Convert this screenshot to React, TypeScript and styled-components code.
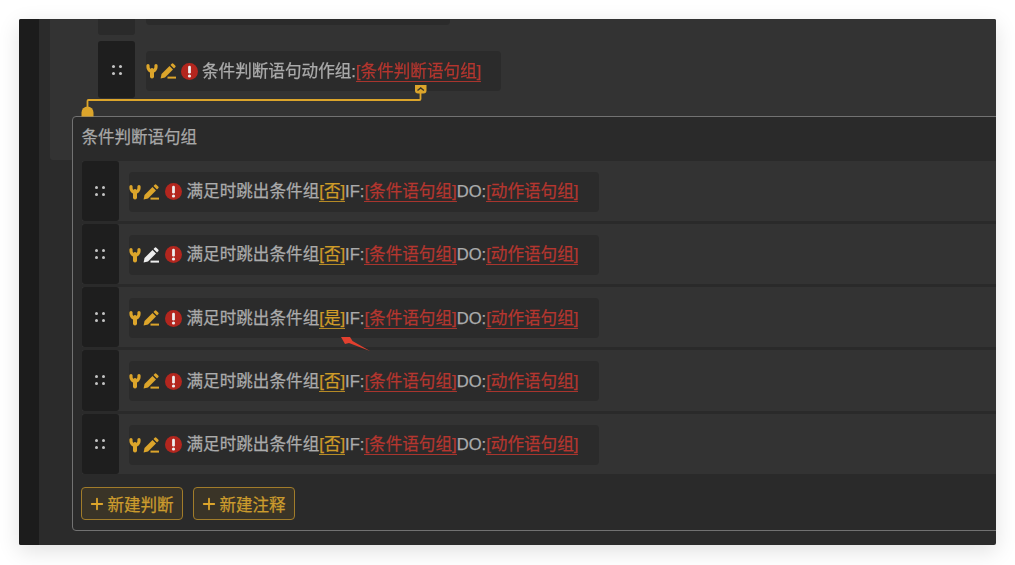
import React from "react";
import styled, { createGlobalStyle } from "styled-components";
import { Plus } from "lucide-react";

const GlobalStyle = createGlobalStyle`
	html, body {
		margin: 0;
		background: #fff;
		font-family: "Liberation Sans", "Noto Sans CJK SC", sans-serif;
	}
`;

const Page = styled.div`
	width: 1015px;
	height: 565px;
	padding: 19px;
	box-sizing: border-box;
	overflow: hidden;
`;

const Frame = styled.div`
	position: relative;
	display: flex;
	width: 977px;
	height: 526px;
	overflow: hidden;
	border-radius: 2px;
	background: #2b2b2b;
	box-shadow: 0 6px 22px rgba(0, 0, 0, 0.12);
	filter: blur(0.5px);
`;

const Strip = styled.div`
	width: 20px;
	background: #1c1c1c;
`;

const Main = styled.div`
	flex: 1;
	padding-left: 11px;
`;

const OuterPanel = styled.div`
	height: 141px;
	padding-left: 48px;
	background: #333;
	border-radius: 0 0 0 3px;
`;

const StubRow = styled.div`
	display: flex;
	height: 16px;
	margin-bottom: 6px;
`;

const StubHandle = styled.div`
	width: 37px;
	background: #2a2a2a;
	border-radius: 0 0 3px 3px;
`;

const StubPill = styled.div`
	width: 304px;
	height: 6px;
	margin-left: 11px;
	background: #2b2b2b;
	border-radius: 0 0 4px 4px;
`;

const Row = styled.div<{ $inner?: boolean }>`
	display: flex;
	height: ${p => (p.$inner ? 60.25 : 57)}px;
	background: #333;
`;

const Handle = styled.div`
	display: grid;
	grid-template-columns: 3px 3px;
	gap: 4px;
	place-content: center;
	width: 37px;
	background: #1e1e1e;
	border-radius: 3px;
`;

const Dot = styled.span`
	width: 3px;
	height: 3px;
	border-radius: 50%;
	background: #c4c4c4;
`;

const Pill = styled.div<{ $inner?: boolean }>`
	display: flex;
	align-items: center;
	align-self: flex-start;
	height: 40px;
	margin: ${p => (p.$inner ? "11px 0 0 10px" : "10px 0 0 11px")};
	padding-right: ${p => (p.$inner ? 21 : 20)}px;
	background: #2b2b2b;
	border-radius: 4px;
	white-space: nowrap;
`;

const IconSet = styled.span<{ $tight?: boolean }>`
	display: flex;
	align-items: center;
	flex: none;
	margin-right: ${p => (p.$tight ? 4 : 5)}px;
`;

const Label = styled.span`
	position: relative;
	top: 0.5px;
	color: #ababab;
	font-size: 16.6px;
	line-height: 19px;
	-webkit-text-stroke: 0.25px currentColor;
`;

const LinkTag = styled.span`
	display: inline-block;
	color: #b5362f;
	border-bottom: 1.5px solid #a8352e;
`;

const ToggleTag = styled.span`
	display: inline-block;
	color: #cf9c28;
	border-bottom: 1.5px solid #b58a26;
`;

const ToolIcon = styled.svg<{ $gap?: number }>`
	display: block;
	flex: none;
	margin-left: ${p => p.$gap ?? 0}px;
`;

const Popup = styled.div`
	position: absolute;
	left: 53px;
	top: 97px;
	right: -4px;
	height: 415px;
	box-sizing: border-box;
	background: #2a2a2a;
	border: 1.5px solid #727272;
	border-radius: 4px;
`;

const Title = styled.div`
	height: 43.5px;
	padding-left: 8.5px;
	color: #a8a8a8;
	font-size: 16.5px;
	line-height: 41px;
	-webkit-text-stroke: 0.25px currentColor;
`;

const RowList = styled.div`
	display: flex;
	flex-direction: column;
	gap: 3px;
	padding-left: 8.5px;
`;

const Footer = styled.div`
	display: flex;
	gap: 10px;
	padding: 13.5px 0 0 7.5px;
`;

const AddButton = styled.div`
	display: flex;
	align-items: center;
	gap: 2px;
	width: 102px;
	height: 33px;
	box-sizing: border-box;
	padding-left: 6px;
	border: 1.5px solid #a17c2a;
	border-radius: 4px;
	background: #3a3427;
	color: #cc9c2d;
	font-size: 16.5px;
	-webkit-text-stroke: 0.25px currentColor;
`;

const Connector = styled.svg`
	position: absolute;
	left: 62px;
	top: 65px;
`;

const Arrow = styled.svg`
	position: absolute;
	left: 320px;
	top: 315px;
`;

const YELLOW = "#dca52b";

const Wrench = () => (
	<ToolIcon width="12" height="16" viewBox="0 0 12 16">
		<path d="M2 2.500v1.700a4 4 0 0 0 8 0V2.500" fill="none" stroke={YELLOW} strokeWidth="3.200" strokeLinecap="round" />
		<path d="M6 7v6.500" fill="none" stroke={YELLOW} strokeWidth="4" strokeLinecap="round" />
	</ToolIcon>
);

const Pencil = ({ color }: { color: string }) => (
	<ToolIcon $gap={2} width="16" height="16" viewBox="0 0 16 16">
		<path d="M.6 15.400l.9-4.400 8-8 3.500 3.500-8 8z" fill={color} />
		<path d="M10.500 2l1.200-1.200a1.200 1.200 0 0 1 1.700 0l1.800 1.800a1.200 1.200 0 0 1 0 1.700L14 5.500z" fill={color} />
		<rect x="7.500" y="13.600" width="8.500" height="2" fill={color} />
	</ToolIcon>
);

const AlertIcon = ({ gap }: { gap: number }) => (
	<ToolIcon $gap={gap} width="17" height="17" viewBox="0 0 17 17">
		<circle cx="8.500" cy="8.500" r="8.500" fill="#b3261e" />
		<rect x="7.100" y="2.800" width="2.800" height="7.800" rx="1.300" fill="#eee" />
		<circle cx="8.500" cy="13" r="1.600" fill="#eee" />
	</ToolIcon>
);

const Grip = () => (
	<Handle>
		<Dot />
		<Dot />
		<Dot />
		<Dot />
	</Handle>
);

const rows = [
	{ id: 1, flag: "否", pencil: YELLOW },
	{ id: 2, flag: "否", pencil: "#eeeeee" },
	{ id: 3, flag: "是", pencil: YELLOW },
	{ id: 4, flag: "否", pencil: YELLOW },
	{ id: 5, flag: "否", pencil: YELLOW },
];

export default function App() {
	return (
		<Page>
			<GlobalStyle />
			<Frame>
				<Strip />
				<Main>
					<OuterPanel>
						<StubRow>
							<StubHandle />
							<StubPill />
						</StubRow>
						<Row>
							<Grip />
							<Pill>
								<IconSet $tight>
									<Wrench />
									<Pencil color={YELLOW} />
									<AlertIcon gap={5} />
								</IconSet>
								<Label>
									条件判断语句动作组:<LinkTag>[条件判断语句组]</LinkTag>
								</Label>
							</Pill>
						</Row>
					</OuterPanel>
				</Main>
				<Popup>
					<Title>条件判断语句组</Title>
					<RowList>
						{rows.map(row => (
							<Row $inner key={row.id}>
								<Grip />
								<Pill $inner>
									<IconSet>
										<Wrench />
										<Pencil color={row.pencil} />
										<AlertIcon gap={6} />
									</IconSet>
									<Label>
										满足时跳出条件组<ToggleTag>[{row.flag}]</ToggleTag>IF:<LinkTag>[条件语句组]</LinkTag>DO:<LinkTag>[动作语句组]</LinkTag>
									</Label>
								</Pill>
							</Row>
						))}
					</RowList>
					<Footer>
						<AddButton>
							<Plus size={18} strokeWidth={2.4} color={YELLOW} />
							新建判断
						</AddButton>
						<AddButton>
							<Plus size={18} strokeWidth={2.4} color={YELLOW} />
							新建注释
						</AddButton>
					</Footer>
				</Popup>
				<Connector width="346" height="33" viewBox="81 84 346 33">
					<path d="M415 85h11.500v5.500a3 3 0 0 1-3 3h-5.500a3 3 0 0 1-3-3z" fill={YELLOW} />
					<path d="M417.500 90.500l3.200-2.500 3.200 2.500" fill="none" stroke="#3a3427" strokeWidth="1.400" />
					<path d="M420.500 93v6a1 1 0 0 1-1 1H88.500a1 1 0 0 0-1 1v6" fill="none" stroke={YELLOW} strokeWidth="1.800" />
					<path d="M81.500 116.500v-4a6 6 0 0 1 12 0v4z" fill={YELLOW} />
				</Connector>
				<Arrow width="32" height="20" viewBox="0 0 32 20">
					<path d="M2 3h9l2.500 4L31 17 10 9 6 10z" fill="#e2402f" />
				</Arrow>
			</Frame>
		</Page>
	);
}
